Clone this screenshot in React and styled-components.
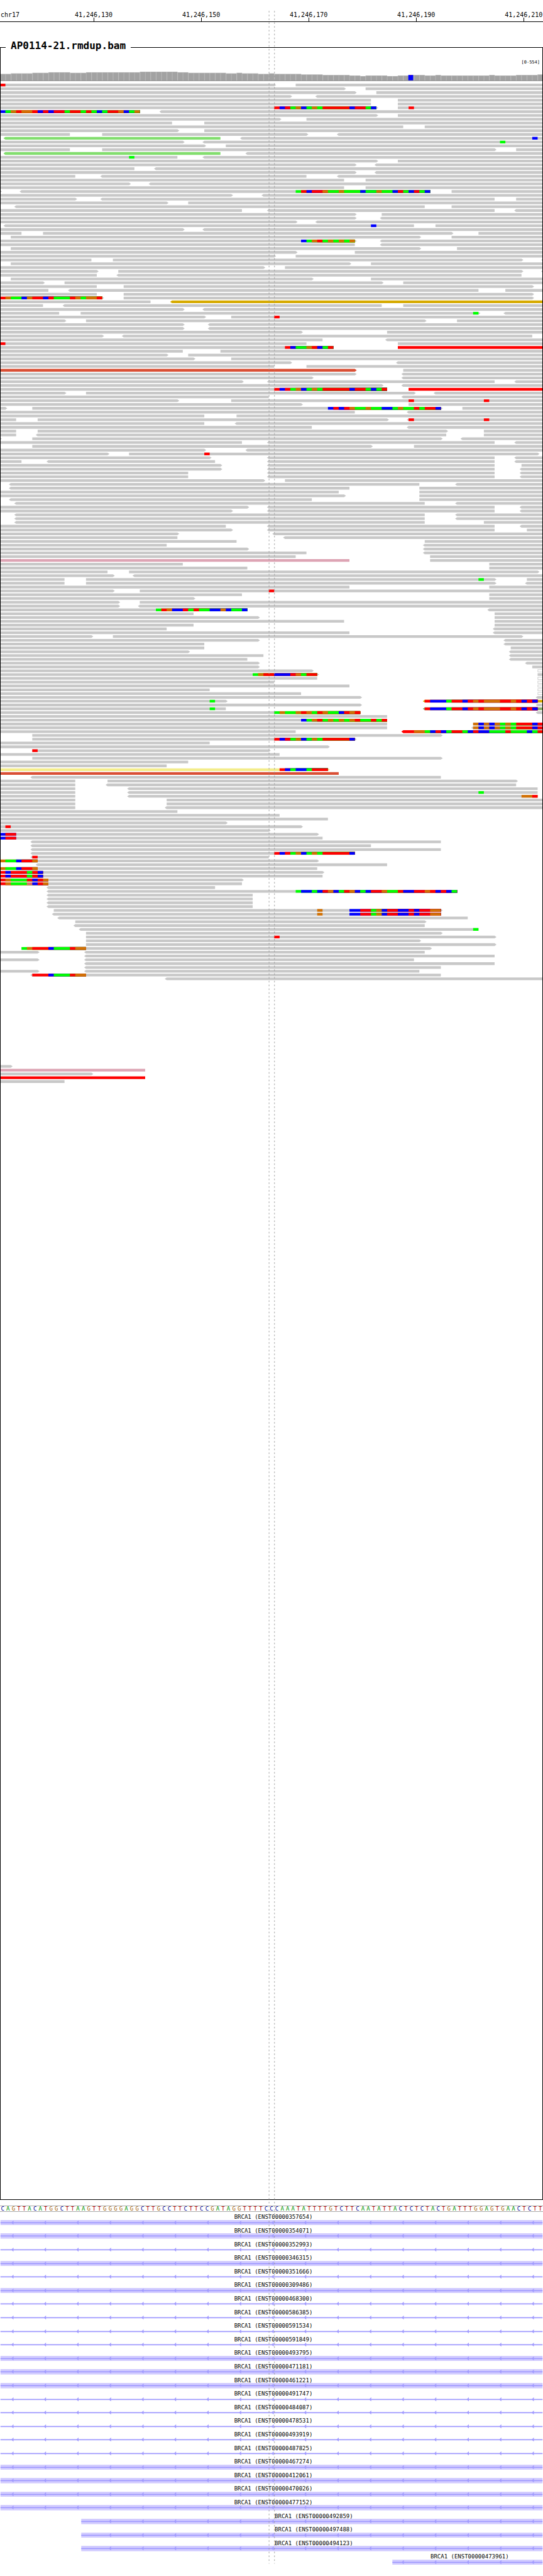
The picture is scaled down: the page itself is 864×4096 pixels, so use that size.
import React from 'react';
import styled, { createGlobalStyle } from 'styled-components';

const BASES = 101;
const WIDTH = 1000;
const STEP = WIDTH / BASES;
const ROW_PITCH = 7;
const READ_HEIGHT = 5;
const PANEL_DEPTH = 3895;

const BASE_FILL = { A: '#00ff00', C: '#0000ff', G: '#d17105', T: '#ff0000', t: '#e06c6c' };
const LETTER_COLOR = { A: '#009600', C: '#000096', G: '#a5640a', T: '#b40000' };
const READ_FILL = {
  green: '#82de6e',
  gold: '#d6aa00',
  brick: '#d94f35',
  pink: '#dda4b4',
  yellow: '#f3ec8a',
  red: '#ff0000',
  olive: '#86aa64',
};

const TICKS = ['41,246,130', '41,246,150', '41,246,170', '41,246,190', '41,246,210'];

const SEQUENCE =
  'CAGTTACATGGCTTAAGTTGGGGAGGCTTGCCTTCTTCCGATAGGTTTTCCCAAATATTTTGTCTTCAATATTACTCTCTACTGATTTGGAGTGAACTCTT';

/* Depth of the coverage track as [number of bases, bar height]. */
const COVERAGE = [
  [2, 12], [4, 13], [3, 14], [4, 15], [3, 14], [10, 15], [7, 16], [2, 15], [7, 14], [2, 13],
  [1, 14], [3, 13], [2, 12], [1, 13], [5, 12], [4, 11], [5, 10], [2, 9], [1, 8], [4, 9],
  [2, 8], [2, 9], [3, 10], [2, 9], [1, 10], [9, 9], [1, 10], [4, 9], [4, 10], [1, 11],
];

/*
 * One line per pile-up row. A read is start-end in bases, with "<" or ">" for
 * the strand arrow, ":name" for a coloured pair and "o" for an outlined read.
 * "@pos" followed by letters lists mismatching bases.
 */
const READS = `
0-51> 55-101 @0T
0-64> 68-101
0-66> 70-101
0-54> <59-101
0-69 74-101
0-69 74-101
0-70> 74-101 @51TCTAGCAGATTTTTCTTAC @76T
0-26 <30-101 @0CAGTGGTCTCTTATTATACATTGCAG
0-70> 74-101
0-52> 57-101
0-32 38-101
0-75 79-101
0-33> 38-101
0-13 19-57> <63-101
<1-41:green <45-101 @99C
0-34> <38-101 @93A
0-38> 42-101
0-13 19-92> 96-101
<1-41:green <46-101
0-33 <38-101 @24A
0-70> 74-101
0-66> <70-101
0-25 <29-101
0-66> <70-101
0-14 <19-57 <63-101
0-64 68-101
0-24> <28-101
0-64 68-101
0-0> <4-80 84-101 @55ATCTTGAAGAAACAAGAACTACTAC
0-43> <49-101
0-14> <19-92 96-101
0-31> 35-101
<3-79 84-101
0-45 <50-92 <96-101
0-66> 71-101
0-66> <71-101
0-55> <59-101
<1-77 81-101 @69C
0-34> <38-101
0-4 8-84> 89-101
2-78> 84-101
0-66> <71-101 @56CAGTAGAGAG
0-66 <71-101
2-78> 85-101
0-55> 66-101
0-51> 55-101
0-17 21-97> <101-101
2-65> 69-101
0-49> 53-101
0-18> 22-97> <101-101
0-18 <22-97
2-58> 69-101
0-8> 12-71> 75-101
0-18 23-99>
0-9 <13-89 94-101
0-18 23-99>
0-19> 23-99> @0TGAACGTTCTAAATGAGGT
0-28 <32-101:gold
0-8 <12-71 75-101
0-34> <38-101
0-11 15-89> <94-101 @88A
0-38> 43-101 @51T
0-12> 16-79> 85-101
0-34> <39-101
0-34> <39-101
0-56> 72-101
0-19> <23-99
0-60 <72-101
0-57 74-101 @0T
0-62 74-101:red @53TCAAGTCAT
0-34 41-101
0-31> 35-101
0-36> 43-101
0-54> <74-101
0-51 57-101
0-66>:brick 75-101
0-66> <75-101
0-58> <75-101
0-45> <50-92 <96-101
0-71> <75-101
0-72 76-101:red @51TCTAGCAGATTTTTCTTACAT
0-12> 16-77> <81-101
0-50 <75-101
0-33> 43-101 @76T @90T
0-56> 76-101
0-1> 6-82> 86-101 @61CTCTGAAGAACCAGAATATTC
0-66 <76-101
0-38 44-101
0-3 7-72> <76-101 @76T @90T
0-38 <44-101
0-58 <76-101
0-3 7-83> 90-101
0-3 <7-83 90-101
0-0> 6-82> <86-101
0-45 <50-92 <96-101
6-69> 77-101
0-38> <46-101
0-20> 24-100> @38T
0-39> <50-92 <96-101
0-4 <9-40 <50-92 <96-101
0-41> <50-92 97-101
0-41> <50-92 <97-101
0-35 <50-92 <97-101
0-35 <50-92 <97-101
0-49> 53-101
<2-78 <85-101
<2-65 78-101
0-63 78-101
0-64> 78-101
<2-58 78-101
<3-79 <85-101
0-46> <50-92 <97-101
0-43> <50-92 <97-101
<3-79 <85-101
<3-79 <85-101
<3-79 90-101
0-42 <50-92 <97-101
0-43> <50-92 98-101
0-33> <51-101
0-33 <53-101
0-44 79-101
0-31 <79-101
0-46> <79-101
0-57 <79-101
0-55 80-101
0-65:pink 80-101
0-34 91-101
0-46 91-101
0-20 24-100>
0-21> <25-101
0-12 16-92> 98-101 @89A
0-12 16-92> <98-101
0-65 91-101
0-21> 26-101 @50T
0-45 91-101
0-36> 91-101
0-22> 26-101
0-22> <26-101
0-46 <91-101 @29ATGCCTATAACCGCAAC
0-36 92-101
0-48> 92-101
0-64 92-101
0-36 92-101
0-31 <92-101
0-65 <92-101
0-17> 21-97>
0-48> <94-101
0-38 <94-101
0-38 95-101
0-35> <95-101
0-49 <95-101
0-46 <95-101
0-48> <98-101
0-48> 99-101
0-58> 100-101o
0-59> 100-101 @47AGTTCCCTGATT
0-59 100-101o
0-51 100-101o
0-65 100-101o
0-39 100-101o
0-56 100-101o
0-67> <100-101
0-42> <79-101:gold @39A @79TCCCATTCTGTGGGTTGTCTC
0-67> <100-101
0-42 <79-101:olive @39A @79TCCCATTCTGTGGGTTGTCTC
0-67 <100-101 @51AGAAGTGATGAACTGT
0-72
0-72 @56CAGTAGAGAGTAATAT
0-72 88-101 @88GCGCGAGATTTCT
0-72 <88-101 @88GCGCGAGATTTCT
0-55 <75-101:red @75TTGGACTCATTACTCCAAATAAACAT
6-82>
6-66> @51TCTAGCAGATTTTTC
0-39
0-61>
6-50> @6T
0-52
6-82>
0-35
0-31
0-61>:yellow @52TCACCATTT
0-63:brick
<6-82
0-14 20-96>
0-14 <20-96
0-14 <24-100
0-14 <24-100 @89A
0-14 <24-100 @97GGT
0-14 31-101
0-14 31-101
0-14 <31-101
0-33
0-52
0-61
0-42>
0-56> @1T
0-50>
0-59> @0CTT
0-60 @0CTT
<6-82
<6-69
<6-82
<6-66 @51TCTAGCAGATTTTTC
<6-50 @6T
0-59> @0GAACTTG
<7-72
0-59 @0GAACTTG
0-60> @0TCTTTATC
0-60 @0TCTTTATC
0-45> @0TGAAATCTG
0-45 @0TGAAAtCTG
<9-40
<9-85 @55ACCACTGCATGCACTTGAATCCTTGTCTCA
<9-47
<9-47
<9-47
<9-47
10-82> @59G @65CCTTAGCTTCCTCTTGG
<10-82 @59G @65CCTTAGCTTCCTCTTGG
<11-87
14-79>
<14-79
<15-89 @88A
16-82>
16-92> @51T
16-78>
16-92>
4-80> @4AGTTTCAAATGG
0-7> <16-79
<16-92
0-7> <16-77
<16-92
<16-82
0-7> <16-78
<6-82 @6TTTCAAATGG
<31-101
`.trim().split('\n');

const LATE_START = 258;
const LATE_READS = ['0-2>', '0-27:pink', '0-17>', '0-27:red', '0-12'];

/* Transcript id, first drawn position, exon (band) or intron only. */
const GENES = [
  ['357654', 0, true], ['354071', 0, true], ['352993', 0, false], ['346315', 0, true],
  ['351666', 0, false], ['309486', 0, true], ['468300', 0, false], ['586385', 0, false],
  ['591534', 0, false], ['591849', 0, false], ['493795', 0, true], ['471181', 0, true],
  ['461221', 0, true], ['491747', 0, false], ['484087', 0, false], ['478531', 0, false],
  ['493919', 0, false], ['487825', 0, false], ['467274', 0, true], ['412061', 0, true],
  ['470026', 0, true], ['477152', 0, true], ['492859', 149, true], ['497488', 149, true],
  ['494123', 149, true], ['473961', 723, true],
];

const GlobalStyle = createGlobalStyle`
  body {
    margin: 0;
    background: #fff;
    color: #000;
    font-family: "DejaVu Sans Mono", "Liberation Mono", monospace;
  }
`;

const Page = styled.main`
  position: relative;
  width: 100%;
  padding-bottom: 13px;
  box-sizing: border-box;
  overflow: hidden;
`;

const Ruler = styled.header`
  display: flex;
  padding-top: 18px;
  overflow: hidden;
  border-bottom: 1px solid #000;
  font-size: 10px;
  line-height: 12px;
  white-space: nowrap;
`;

const Chromosome = styled.div`
  flex: none;
  width: 7.35%;
  padding-left: 1px;
  box-sizing: border-box;
`;

const TickCell = styled.div`
  flex: none;
  width: 19.8%;
  display: flex;
  flex-direction: column;
  align-items: center;

  &::after {
    content: '';
    width: 1px;
    height: 6px;
    margin-top: -2px;
    background: #000;
  }
`;

const Panel = styled.section`
  position: relative;
  margin-top: 29px;
`;

const Frame = styled.div`
  position: absolute;
  inset: 11px 0 0;
  border: solid #000;
  border-width: 0 1px 1px;
  pointer-events: none;
`;

const PanelHeader = styled.div`
  display: flex;
  height: 22px;
`;

const HeaderRule = styled.span`
  flex: ${(p) => (p.$grow ? '1' : '0 0 9px')};
  align-self: center;
  height: 1px;
  background: #000;
`;

const PanelTitle = styled.h1`
  margin: 0;
  padding: 0 8px;
  font-size: 16px;
  line-height: 18px;
  font-weight: bold;
`;

const RangeLabel = styled.div`
  padding: 8px 5px 4px 0;
  text-align: right;
  font-size: 7px;
  line-height: 10px;
`;

const Chart = styled.svg`
  display: block;
  width: 100%;
  height: auto;
`;

const SequenceTrack = styled.div`
  display: grid;
  grid-template-columns: repeat(${BASES}, minmax(0, 1fr));
  margin-top: 9px;
  border: solid #aaa;
  border-width: 1px 0;
  font-size: 9px;
  line-height: 8px;
  text-align: center;
`;

const Letter = styled.span`
  color: ${(p) => LETTER_COLOR[p.$base]};
`;

const GeneList = styled.ul`
  display: grid;
  grid-template-rows: repeat(${GENES.length}, minmax(0, 1fr));
  min-height: 0;
  margin: 3px 0 0;
  padding: 0;
  list-style: none;
  aspect-ratio: 1000 / 650;
`;

const GeneRow = styled.li`
  display: grid;
  grid-template-columns: minmax(0, 1fr);
  grid-template-rows: minmax(0, 11fr) minmax(0, 10fr) minmax(0, 4fr);
  min-height: 0;
`;

const GeneLabel = styled.div`
  margin-left: ${(p) => p.$start / 10}%;
  padding-left: 6px;
  font-size: 9px;
  line-height: 11px;
  text-align: center;
  white-space: nowrap;
`;

const Guides = styled.svg`
  position: absolute;
  top: 0;
  left: 0;
  width: 100%;
  height: auto;
  pointer-events: none;
`;

function Read({ spec, y }) {
  const [, back, start, end, forward, outline, name] = spec.match(
    /^(<?)(\d+)-(\d+)(>?)(o?)(?::(\w+))?$/
  );
  const x0 = start * STEP;
  const x1 = end * STEP;
  const mid = y + READ_HEIGHT / 2;
  const bottom = y + READ_HEIGHT;
  if (outline) {
    return (
      <rect x={x0 + 0.5} y={y + 0.5} width={x1 - x0 + 2} height={4} fill="#fff" stroke="#c8c8c8" />
    );
  }
  const right = forward ? `L${x1 + 3.5} ${mid}` : '';
  const left = back ? `L${x0 - 3.5} ${mid}` : '';
  return (
    <path
      d={`M${x0} ${y}H${x1}${right}L${x1} ${bottom}H${x0}${left}Z`}
      fill={READ_FILL[name] || '#c8c8c8'}
    />
  );
}

function Mismatches({ spec, y }) {
  const [, pos, letters] = spec.match(/^@(\d+)(\w+)$/);
  const first = Number(pos);
  const end = (first + letters.length) * STEP;
  return [...letters].map((letter, i) => {
    if (i > 0 && letters[i - 1] === letter) return null;
    const x = (first + i) * STEP;
    return (
      <rect key={i} x={x} y={y} width={end - x} height={READ_HEIGHT} fill={BASE_FILL[letter]} />
    );
  });
}

function PileupRow({ row, index }) {
  const y = index * ROW_PITCH;
  return (
    <g>
      {row.split(' ').map((spec, i) =>
        spec[0] === '@' ? (
          <Mismatches key={i} spec={spec} y={y} />
        ) : (
          <Read key={i} spec={spec} y={y} />
        )
      )}
    </g>
  );
}

function Pileup() {
  return (
    <Chart viewBox={`0 0 ${WIDTH} ${PANEL_DEPTH}`}>
      {READS.map((row, i) => (
        <PileupRow key={i} row={row} index={i} />
      ))}
      {LATE_READS.map((row, i) => (
        <PileupRow key={i} row={row} index={LATE_START + i} />
      ))}
    </Chart>
  );
}

function Coverage() {
  const heights = COVERAGE.flatMap(([count, h]) => Array(count).fill(h));
  return (
    <Chart viewBox={`0 0 ${WIDTH} 29`}>
      {heights.map((h, i) => (
        <g key={i}>
          <rect x={i * STEP} y={23 - h} width={STEP + 0.2} height={h} fill="#b0b0b0" />
          <rect x={i * STEP + 1.2} y={24 - h} width={STEP - 1.6} height={h - 1} fill="#a2a2a2" />
        </g>
      ))}
      <rect x="752" y="13" width="9" height="10" fill="#0000ff" />
      <rect x="756" y="13" width="1" height="1" fill="#ff0000" />
      <rect x="0" y="23" width={WIDTH} height="1" fill="#777" />
    </Chart>
  );
}

function Gene({ id, start, exon }) {
  const arrows = [];
  for (let x = 24; x < WIDTH; x += 60) if (x > start) arrows.push(x);
  return (
    <GeneRow>
      <GeneLabel $start={start}>{`BRCA1 (ENST00000${id})`}</GeneLabel>
      <Chart viewBox={`0 0 ${WIDTH} 10`}>
        {exon && <rect x={start} y="0" width={WIDTH - start} height="10" fill="#d2ccff" />}
        <rect x={start} y="4" width={WIDTH - start} height="2" fill="#a09aff" />
        {arrows.map((x) => (
          <path key={x} d={`M${x} 1V8.5L${x - 4} 5Z`} fill="#a09aff" />
        ))}
      </Chart>
    </GeneRow>
  );
}

export default function App() {
  return (
    <Page>
      <GlobalStyle />
      <Ruler>
        <Chromosome>chr17</Chromosome>
        {TICKS.map((label) => (
          <TickCell key={label}>{label}</TickCell>
        ))}
      </Ruler>
      <Panel>
        <PanelHeader>
          <HeaderRule />
          <PanelTitle>AP0114-21.rmdup.bam</PanelTitle>
          <HeaderRule $grow />
        </PanelHeader>
        <RangeLabel>[0-554]</RangeLabel>
        <Coverage />
        <Pileup />
        <Frame />
      </Panel>
      <SequenceTrack>
        {[...SEQUENCE].map((base, i) => (
          <Letter key={i} $base={base}>
            {base}
          </Letter>
        ))}
      </SequenceTrack>
      <GeneList>
        {GENES.map(([id, start, exon]) => (
          <Gene key={id} id={id} start={start} exon={exon} />
        ))}
      </GeneList>
      <Guides viewBox="0 0 1000 4738">
        {[495.5, 505.5].map((x) => (
          <line key={x} x1={x} x2={x} y1="20" y2="4718" stroke="#969696" strokeDasharray="3 4" />
        ))}
      </Guides>
    </Page>
  );
}
